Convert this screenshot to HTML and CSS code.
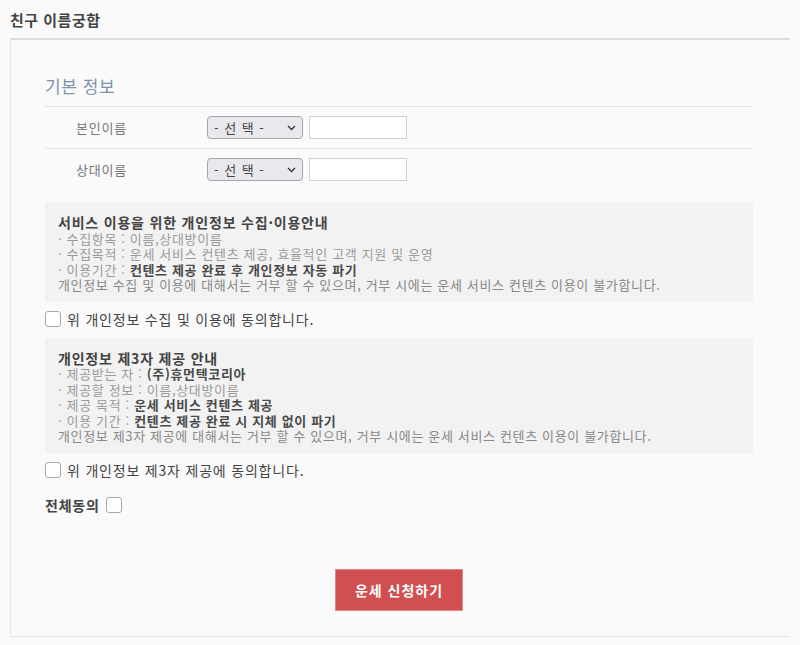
FILE: index.html
```html
<!DOCTYPE html>
<html lang="ko">
<head>
    <meta charset="UTF-8">
    <meta name="viewport" content="width=device-width, initial-scale=1.0">
    <title>친구 이름궁합</title>
    <link rel="stylesheet" href="styles.css">
</head>
<body>
    <div class="page">
        <h2 class="page-title">친구 이름궁합</h2>

        <div class="form-box">
            <!-- 기본 정보 -->
            <h3 class="section-title">기본 정보</h3>
            <div class="field-row">
                <span class="field-label">본인이름</span>
                <div class="select-wrap">
                    <select class="name-select">
                        <option>- 선 택 -</option>
                    </select>
                    <svg class="chevron" width="9" height="6" viewBox="0 0 9 6"><path d="M1 1l3.5 3.5L8 1" fill="none" stroke="#333" stroke-width="1.3"/></svg>
                </div>
                <input type="text" class="name-input">
            </div>
            <div class="field-row">
                <span class="field-label">상대이름</span>
                <div class="select-wrap">
                    <select class="name-select">
                        <option>- 선 택 -</option>
                    </select>
                    <svg class="chevron" width="9" height="6" viewBox="0 0 9 6"><path d="M1 1l3.5 3.5L8 1" fill="none" stroke="#333" stroke-width="1.3"/></svg>
                </div>
                <input type="text" class="name-input">
            </div>

            <!-- 개인정보 수집 -->
            <div class="notice notice-first">
                <strong class="notice-title">서비스 이용을 위한 개인정보 수집·이용안내</strong>
                <p>· 수집항목 : 이름,상대방이름</p>
                <p>· 수집목적 : 운세 서비스 컨텐츠 제공, 효율적인 고객 지원 및 운영</p>
                <p>· 이용기간 : <b>컨텐츠 제공 완료 후 개인정보 자동 파기</b></p>
                <p class="notice-foot">개인정보 수집 및 이용에 대해서는 거부 할 수 있으며, 거부 시에는 운세 서비스 컨텐츠 이용이 불가합니다.</p>
            </div>
            <label class="agree-row">
                <input type="checkbox" class="check">
                <span>위 개인정보 수집 및 이용에 동의합니다.</span>
            </label>

            <!-- 제3자 제공 -->
            <div class="notice">
                <strong class="notice-title">개인정보 제3자 제공 안내</strong>
                <p>· 제공받는 자 : <b>(주)휴먼텍코리아</b></p>
                <p>· 제공할 정보 : 이름,상대방이름</p>
                <p>· 제공 목적 : <b>운세 서비스 컨텐츠 제공</b></p>
                <p>· 이용 기간 : <b>컨텐츠 제공 완료 시 지체 없이 파기</b></p>
                <p class="notice-foot">개인정보 제3자 제공에 대해서는 거부 할 수 있으며, 거부 시에는 운세 서비스 컨텐츠 이용이 불가합니다.</p>
            </div>
            <label class="agree-row">
                <input type="checkbox" class="check">
                <span>위 개인정보 제3자 제공에 동의합니다.</span>
            </label>

            <label class="agree-all">
                <span>전체동의</span>
                <input type="checkbox" class="check">
            </label>

            <div class="btn-area">
                <button type="button" class="btn-submit">운세 신청하기</button>
            </div>
        </div>
    </div>
</body>
</html>
```

FILE: styles.css
```css
body {
    margin: 0;
    background-color: #fafafa;
    font-family: "Noto Sans CJK KR", "Noto Sans", sans-serif;
    color: #444;
}

.page {
    margin: 0 10px;
}

/* 상단 제목 */
.page-title {
    margin: 0;
    padding-top: 11px;
    height: 27px;
    font-size: 15px;
    line-height: 18px;
    letter-spacing: 0.5px;
    font-weight: bold;
    color: #444;
}

/* 폼 박스 */
.form-box {
    border-top: 2px solid #dcdcdc;
    border-left: 1px solid #e6e6e6;
    border-bottom: 1px solid #e6e6e6;
    padding: 34px 37px 25px 34px;
}

.section-title {
    margin: 0;
    padding-bottom: 8px;
    font-size: 17px;
    line-height: 24px;
    letter-spacing: 0.6px;
    font-weight: normal;
    color: #7d93ad;
    border-bottom: 1px solid #e0e0e0;
}

.field-row {
    display: flex;
    align-items: center;
    height: 41px;
}

.field-row + .field-row {
    border-top: 1px solid #e0e0e0;
}

.field-label {
    width: 131px;
    padding-left: 31px;
    font-size: 13px;
    letter-spacing: 0.8px;
    color: #777;
}

.select-wrap {
    position: relative;
    margin-right: 6px;
}

.name-select {
    appearance: none;
    -webkit-appearance: none;
    display: block;
    width: 96px;
    height: 23px;
    padding: 0 0 0 6px;
    border: 1px solid #a4a4ac;
    border-radius: 4px;
    background: #e9e9ed;
    font-family: inherit;
    font-size: 13px;
    color: #444;
    word-spacing: 2px;
}

.chevron {
    position: absolute;
    right: 7px;
    top: 9px;
    pointer-events: none;
}

.name-input {
    width: 98px;
    height: 23px;
    box-sizing: border-box;
    border: 1px solid #d0d0d0;
    background: #fff;
    margin: 0;
}

/* 안내 박스 */
.notice {
    background: #f2f2f2;
    padding: 13px 13px 9px;
    font-size: 13px;
    line-height: 15.5px;
    letter-spacing: 0.65px;
    color: #9a9a9a;
}

.notice-first {
    margin-top: 12px;
}

.notice-title {
    display: block;
    font-size: 14px;
    letter-spacing: 0.8px;
    color: #444;
}

.notice p {
    margin: 0;
}

.notice b {
    color: #4a4a4a;
}

.notice .notice-foot {
    color: #888;
}

/* 동의 체크 */
.agree-row {
    display: flex;
    align-items: center;
    gap: 6px;
    height: 18px;
    margin: 8px 0 10px;
    font-size: 14px;
    letter-spacing: 0.8px;
    color: #444;
}

.check {
    appearance: none;
    -webkit-appearance: none;
    width: 16px;
    height: 16px;
    margin: 0;
    border: 1px solid #a8a8a8;
    border-radius: 3px;
    background: #fff;
}

.agree-all {
    display: flex;
    align-items: center;
    gap: 6px;
    height: 18px;
    margin-top: 17px;
    font-size: 14px;
    letter-spacing: 0.8px;
    font-weight: bold;
    color: #444;
}

/* 신청 버튼 */
.btn-area {
    display: flex;
    justify-content: center;
    margin-top: 55px;
}

.btn-submit {
    width: 128px;
    height: 42px;
    border: 1px solid #e58585;
    background: #d04f50;
    color: #fff;
    font-family: inherit;
    font-size: 14px;
    letter-spacing: 1px;
    font-weight: bold;
}
```
